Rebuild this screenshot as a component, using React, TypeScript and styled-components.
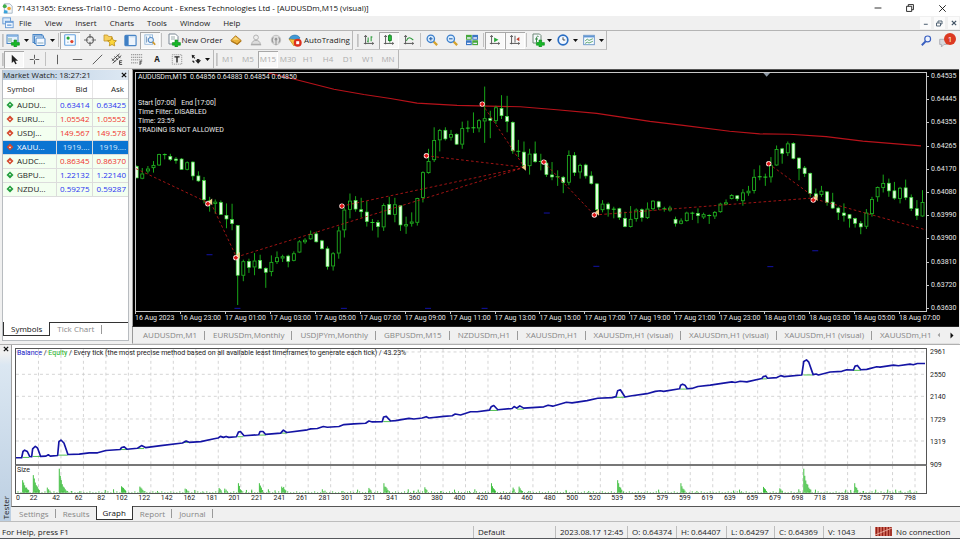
import React from 'react';
import styled, { createGlobalStyle, css } from 'styled-components';

const UI = '"Open Sans", "Noto Sans", sans-serif';
const CHART = 'Roboto, "Open Sans", sans-serif';

const GlobalStyle = createGlobalStyle`
  *, *::before, *::after { box-sizing: border-box; }
  body { margin: 0; background: #f0f0f0; }
  button, input { font: inherit; color: inherit; }
`;

/* ---------- shell ---------- */

const Window = styled.div`
  display: flex;
  flex-direction: column;
  min-height: 100vh;
  background: #f0f0f0;
  color: #1c1c1c;
  font: 8px/12px ${UI};
  border-bottom: 1px solid #55585c;
  overflow: hidden;
`;

const plainButton = css`
  display: flex;
  align-items: center;
  margin: 0;
  padding: 0;
  border: 0;
  background: none;
  font: inherit;
  color: inherit;
  white-space: nowrap;
`;

const TitleBar = styled.header`
  display: flex;
  align-items: center;
  height: 16px;
  padding-left: 2px;
  gap: 4px;
  background: #fff;
`;

const Title = styled.h1`
  margin: 0;
  flex: 1;
  font: inherit;
  line-height: 16px;
  color: #111;
`;

const WindowButtons = styled.div`
  display: flex;
  padding-right: 2px;
`;

const WindowButton = styled.button`
  ${plainButton}
  justify-content: center;
  width: 32px;
  height: 14px;
`;

const MenuBar = styled.nav`
  display: flex;
  align-items: center;
  height: 15px;
  padding-left: 2px;
  border-bottom: 1px solid #b4b4b4;
`;

const MenuItems = styled.div`
  display: flex;
  flex: 1;
  gap: 13px;
  padding-left: 5px;
`;

const MenuButton = styled.button`
  ${plainButton}
  height: 14px;
`;

const ChildButtons = styled.div`
  display: flex;
  gap: 3px;
  padding-right: 1px;
`;

const ChildButton = styled.button`
  ${plainButton}
  justify-content: center;
  width: 11px;
  height: 12px;
  background: #fbfbfb;
`;

/* ---------- toolbars ---------- */

const ToolRow = styled.div<{ $gap?: number }>`
  display: flex;
  align-items: center;
  height: 19px;
  gap: ${(p) => p.$gap ?? 0}px;
  padding-right: 4px;
`;

const ToolGroup = styled.div`
  display: flex;
  align-items: center;
  height: 19px;
  padding-left: 4px;
  border-bottom: 1px solid #c4c4c4;
  border-right: 1px solid #b8b8b8;
  &::before {
    content: '';
    width: 2px;
    height: 13px;
    margin-left: -2px;
    border-left: 1px solid #c2c2c2;
    border-right: 1px solid #cfcfcf;
  }
`;

const ToolButton = styled.button<{ $w?: number; $pressed?: boolean; $gap?: number }>`
  ${plainButton}
  justify-content: center;
  width: ${(p) => p.$w ?? 20}px;
  height: 17px;
  gap: ${(p) => p.$gap ?? 0}px;
  ${(p) =>
    p.$pressed &&
    css`
      background: #f8f8f8;
      box-shadow: inset 1px 1px #a8a8a8, inset -1px -1px #fff;
    `}
`;

const Frame = styled(ToolButton)`
  color: #adadad;
`;

const Divider = styled.span`
  width: 1px;
  height: 14px;
  margin: 0 1px;
  background: #c0c0c0;
`;

const Spacer = styled.span`
  flex: 1;
`;

const Alert = styled.button`
  ${plainButton}
  position: relative;
  width: 18px;
  height: 17px;
`;

const Badge = styled.span`
  position: absolute;
  top: 1px;
  right: 0;
  width: 12px;
  height: 12px;
  border-radius: 50%;
  background: #dc3a22;
  color: #fff;
  line-height: 12px;
  text-align: center;
`;

/* ---------- market watch ---------- */

const Main = styled.main`
  display: flex;
  flex: 1 1 275px;
  min-height: 275px;
  gap: 3px;
  padding: 0 1px 0 2px;
`;

const Watch = styled.section`
  display: flex;
  flex-direction: column;
  flex: 0 0 127px;
  margin: 1px 0 3px;
  border: 1px solid #b8bcc0;
  border-top: 0;
  background: #fff;
`;

const WatchHead = styled.div`
  display: flex;
  align-items: center;
  justify-content: space-between;
  height: 10px;
  padding-right: 1px;
  line-height: 10px;
  background: linear-gradient(90deg, #b9cde1, #dde8f3);
`;

const WatchTable = styled.table`
  width: 100%;
  table-layout: fixed;
  border-collapse: collapse;
`;

const Th = styled.th<{ $end?: boolean; $w: number }>`
  width: ${(p) => p.$w}px;
  height: 18px;
  padding: 0 4px;
  font-weight: 400;
  text-align: ${(p) => (p.$end ? 'right' : 'left')};
  border-right: 1px solid #e6e6e6;
  border-bottom: 1px solid #d4d4d4;
  &:last-child { border-right: 0; }
`;

const Tr = styled.tr<{ $selected?: boolean; $down?: boolean }>`
  background: ${(p) => (p.$selected ? '#0b74d2' : '#f3fff0')};
  color: ${(p) => (p.$selected ? '#fff' : '#1c1c1c')};
  td + td {
    color: ${(p) => (p.$selected ? '#d8ecff' : p.$down ? '#f0322c' : '#2a34f0')};
  }
`;

const Td = styled.td<{ $end?: boolean }>`
  height: 14px;
  padding: 0 2px 0 3px;
  text-align: ${(p) => (p.$end ? 'right' : 'left')};
  border-right: 1px solid #dcdcdc;
  border-bottom: 1px solid #dcdcdc;
  white-space: nowrap;
  &:last-child { border-right: 0; }
`;

const SymbolCell = styled.span`
  display: flex;
  align-items: center;
  gap: 3px;
`;

const PanelTabs = styled.div`
  display: flex;
  height: 18px;
  margin-top: auto;
  border-top: 1px solid #333;
`;

const PanelTab = styled.button<{ $active?: boolean }>`
  ${plainButton}
  height: 14px;
  margin-top: -1px;
  padding: 0 7px;
  color: ${(p) => (p.$active ? '#111' : '#8a8a8a')};
  ${(p) =>
    p.$active
      ? css`
          background: #fff;
          border: 1px solid #333;
          border-top: 0;
        `
      : css`
          &::after { content: ''; width: 1px; height: 9px; margin-left: 7px; margin-right: -7px; background: #9a9a9a; }
        `}
`;

/* ---------- price chart ---------- */

const ChartColumn = styled.section`
  display: flex;
  flex-direction: column;
  flex: 1;
  min-width: 0;
`;

const ChartFrame = styled.div`
  display: grid;
  flex: 1;
  grid-template-columns: minmax(0, 1fr) 32px;
  grid-template-rows: minmax(0, 1fr) 14px;
  padding: 2px 0 0 2px;
  background: #000;
  border-top: 1px solid #555;
  border-left: 1px solid #a0a0a0;
  color: #e8e8e8;
  font: 7px/9px ${CHART};
`;

const PlotArea = styled.div`
  position: relative;
  border: 1px solid #c8c8c8;
`;

const PlotSvg = styled.svg`
  position: absolute;
  inset: 0;
  width: 100%;
  height: 100%;
`;

const PlotNotes = styled.pre`
  position: relative;
  margin: 0;
  padding: 0 0 0 2px;
  font: inherit;
`;

const NoteBlock = styled.span`
  display: block;
  margin-top: 17px;
`;

const PriceAxis = styled.div`
  display: flex;
  flex-direction: column;
  justify-content: space-between;
  margin-bottom: -1px;
`;

const PriceLabel = styled.span`
  display: flex;
  align-items: center;
  gap: 2px;
  &::before { content: ''; width: 2px; height: 1px; background: #c8c8c8; }
`;

const TimeAxis = styled.div`
  display: grid;
  grid-column: 1 / -1;
  grid-template-columns: repeat(18, minmax(0, 1fr));
  margin-right: 15px;
`;

const TimeLabel = styled.span`
  white-space: nowrap;
  &::before { content: ''; display: block; width: 1px; height: 2px; background: #c8c8c8; }
`;

const ChartTabs = styled.div`
  display: flex;
  align-items: center;
  height: 18px;
  padding-right: 2px;
  border-top: 1px solid #222;
  border-left: 1px solid #999;
  border-bottom: 1px solid #e0e0e0;
  color: #868686;
`;

const ChartTabList = styled.div`
  display: flex;
  flex: 1;
  min-width: 0;
  overflow: hidden;
  padding-left: 2px;
`;

const ChartTab = styled.button`
  ${plainButton}
  flex: none;
  height: 9px;
  padding: 0 7px 0 8px;
  border-right: 1px solid #9a9a9a;
  &:last-child { border-right: 0; padding-right: 0; }
`;

const ScrollButton = styled.button`
  ${plainButton}
  justify-content: center;
  width: 12px;
  height: 12px;
`;

/* ---------- tester ---------- */

const Tester = styled.section`
  display: flex;
  height: 177px;
  border-top: 1px solid #b0b0b0;
`;

const TesterRail = styled.div`
  display: flex;
  flex-direction: column;
  align-items: center;
  justify-content: space-between;
  width: 11px;
  padding: 1px 0 2px;
  background: linear-gradient(#f0f0f0 8px, #dbe7f2 20px, #bccfe2);
`;

const RailLabel = styled.span`
  writing-mode: vertical-rl;
  transform: rotate(180deg);
  line-height: 11px;
`;

const TesterBody = styled.div`
  display: flex;
  flex-direction: column;
  flex: 1;
  min-width: 0;
`;

const TesterPlots = styled.div`
  display: grid;
  grid-template-columns: minmax(0, 1fr) 32px;
  grid-template-rows: 118px 28px 12px;
  padding: 3px 1px 0 3px;
  background: #fff;
  border-left: 1px solid #a0a0a0;
  border-bottom: 1px solid #555;
  font: 7px/9px ${CHART};
  margin-bottom: -1px;
`;

const BalancePlot = styled.div`
  position: relative;
  border: 1px solid #555;
  border-bottom: 2px solid #777;
`;

const SizePlot = styled.div`
  position: relative;
  border: 1px solid #555;
  border-top: 0;
`;

const Legend = styled.p`
  position: relative;
  margin: 0;
  padding: 0 0 0 1px;
  white-space: nowrap;
  color: #222;
`;

const Tint = styled.span<{ $c: string }>`
  color: ${(p) => p.$c};
`;

const BalanceAxis = styled.div`
  display: flex;
  flex-direction: column;
  justify-content: space-between;
  height: 122px;
  padding-left: 3px;
`;

const TradeAxis = styled.div`
  display: grid;
  grid-template-columns: repeat(40, minmax(0, 45fr)) minmax(0, 22fr);
  grid-column: 1;
  grid-row: 3;
`;

const TradeTick = styled.span`
  display: flex;
  justify-content: flex-end;
  white-space: nowrap;
`;

const TradeZero = styled.span`
  margin-right: auto;
  padding-left: 1px;
`;

const TesterTabs = styled.div`
  display: flex;
  align-items: center;
  height: 15px;
  padding-left: 1px;
`;

const TesterTab = styled.button<{ $active?: boolean; $bare?: boolean }>`
  ${plainButton}
  height: ${(p) => (p.$active ? 14 : 9)}px;
  padding: 0 6px 0 7px;
  color: ${(p) => (p.$active ? '#111' : '#868686')};
  ${(p) =>
    p.$active
      ? css`
          align-self: flex-start;
          border: 1px solid #333;
          border-top: 0;
          background: #fff;
          padding: 0 6px;
        `
      : !p.$bare &&
        css`
          border-right: 1px solid #9a9a9a;
        `}
`;

/* ---------- status bar ---------- */

const StatusBar = styled.footer`
  display: flex;
  align-items: center;
  height: 17px;
  padding-top: 3px;
  border-top: 1px solid #bdbdbd;
`;

const StatusCell = styled.span<{ $w?: number }>`
  display: flex;
  align-items: center;
  gap: 4px;
  flex: ${(p) => (p.$w ? `0 0 ${p.$w}px` : '1 1 0')};
  height: 12px;
  padding-left: ${(p) => (p.$w ? 4 : 2)}px;
  border-left: ${(p) => (p.$w ? '1px solid #bdbdbd' : '0')};
  white-space: nowrap;
`;

/* ---------- icons ---------- */

const IconSvg = styled.svg`
  display: block;
  flex: none;
`;

const Icon = ({ children, size = 12 }: { children: React.ReactNode; size?: number }) => (
  <IconSvg width={size} height={size} viewBox="0 0 14 14" fill="none" aria-hidden>
    {children}
  </IconSvg>
);

const Caret = () => (
  <IconSvg width="5" height="3" viewBox="0 0 5 3" aria-hidden>
    <path d="M0 0h5L2.5 3z" fill="#111" />
  </IconSvg>
);

const plus = <path d="M8 7h2.6v2.6h2.8v2.6h-2.8V14H8v-1.8H5.4V9.6H8z" fill="#18b828" stroke="#0a8a1a" strokeWidth=".6" />;
const axes = <path d="M3 2v10M1.5 3.5L3 1.5l1.5 2M1 11h11M10.8 9.8l1.7 1.2-1.7 1.3" stroke="#555" strokeWidth="1.1" />;

const LogoIcon = () => (
  <Icon size={11}>
    <path d="M3 1h7l3 3v9H3z" fill="#f4f7fa" stroke="#9ab" />
    <circle cx="3.5" cy="4" r="2.5" fill="#3fae49" />
    <circle cx="9" cy="7" r="2.3" fill="#f4a32c" />
    <path d="M3 9l4 1v3H2z" fill="#38a3dc" />
  </Icon>
);
const ChildIcon = () => (
  <Icon size={12}>
    <rect x="1" y="1" width="9" height="7" fill="#dcebfa" stroke="#5f95d3" />
    <rect x="4" y="5" width="9" height="7.5" fill="#eef6ff" stroke="#5f95d3" />
    <path d="M4 6h9M6 9.5h5" stroke="#5f95d3" strokeWidth="1.4" />
  </Icon>
);
const NewChartIcon = () => (
  <Icon size={14}>
    <rect x="1" y="2" width="11" height="8.5" fill="#e6f1fc" stroke="#4a86c6" />
    <path d="M2 3h9" stroke="#7fb0e2" strokeWidth="1.6" />
    <path d="M3 5v4M5 5v4" stroke="#7a9" />
    {plus}
  </Icon>
);
const ProfilesIcon = () => (
  <Icon size={14}>
    <rect x="1" y="1.5" width="9" height="8" fill="#cfe2f6" stroke="#4a86c6" />
    <rect x="2.5" y="3" width="9" height="7.5" fill="#e6f1fc" stroke="#4a86c6" />
    <rect x="4" y="5" width="9" height="7.5" rx="1" fill="#f3f8ff" stroke="#4a86c6" />
    <path d="M5.5 10h6" stroke="#8ab" />
  </Icon>
);
const WatchIcon = () => (
  <Icon>
    <rect x=".8" y=".8" width="12.4" height="12.4" rx="1" fill="#f7fbff" stroke="#67a3e0" strokeWidth="1.3" />
    <circle cx="4.8" cy="4.8" r="1.9" fill="#22a532" />
    <circle cx="9.2" cy="8.8" r="1.9" fill="#e0442c" />
    <path d="M3.5 9.5h2" stroke="#9ab" />
  </Icon>
);
const CrosshairIcon = () => (
  <Icon>
    <circle cx="7" cy="7" r="4" stroke="#666" strokeWidth="1.3" />
    <path d="M7 0v5M7 9v5M0 7h5M9 7h5" stroke="#666" strokeWidth="1.3" />
  </Icon>
);
const NavigatorIcon = () => (
  <Icon size={14}>
    <path d="M1 2h3.5l1 1.5H9V8H1z" fill="#f6cf5c" stroke="#c3942a" strokeWidth=".8" />
    <path d="M9 4.5l1.4 2.8 3 .4-2.2 2.2.5 3L9 11.5l-2.7 1.4.5-3-2.2-2.2 3-.4z" fill="#fbd63c" stroke="#b98a14" strokeWidth=".8" />
  </Icon>
);
const TerminalIcon = () => (
  <Icon size={13}>
    <rect x="1" y="1.5" width="12" height="11" rx="1" fill="#eef5fc" stroke="#4a86c6" strokeWidth="1.3" />
    <path d="M1 2h4v10H1z" fill="#3f7fc4" />
    <path d="M6 3h6" stroke="#b8d2ec" />
  </Icon>
);
const TesterIcon = () => (
  <Icon>
    <rect x="1" y="1" width="9" height="11" fill="#f7fbff" stroke="#8fb4d8" />
    <path d="M3 3v7M5 5v4M7 2v3" stroke="#6a8fb5" />
    <circle cx="8" cy="7" r="3" fill="#e3f0fb" stroke="#5b8fc8" strokeWidth="1.2" />
    <path d="M10.2 9.2L13 12.5" stroke="#d09a2c" strokeWidth="2" />
  </Icon>
);
const OrderIcon = () => (
  <Icon size={14}>
    <path d="M2 1h6.5L11 3.5V11H2z" fill="#fff" stroke="#7a8794" />
    <path d="M4 4h4M4 6h4" stroke="#9aa" />
    {plus}
  </Icon>
);
const GoldIcon = () => (
  <Icon>
    <path d="M1 7.5L6.5 2 13 7.5 8.5 12z" fill="#e9b03a" stroke="#a87018" />
    <path d="M3 6.8l3.5-3.4 4 3.4z" fill="#f8da80" />
    <path d="M1.5 8.5l7 3.5 4.5-4" stroke="#b07818" strokeWidth="1.4" />
  </Icon>
);
const MetaIcon = () => (
  <Icon>
    <circle cx="7" cy="4" r="2.8" fill="#eee" stroke="#aaa" />
    <path d="M2 12c0-3 2-4.5 5-4.5s5 1.5 5 4.5z" fill="#ddd" stroke="#aaa" />
    <path d="M1 12.5h12" stroke="#aaa" strokeWidth="1.5" />
  </Icon>
);
const SignalIcon = () => (
  <Icon>
    <circle cx="7" cy="7" r="5.5" fill="#e0e0e0" stroke="#bbb" />
    <path d="M4 4a4 4 0 000 6M10 4a4 4 0 010 6M7 6v7" stroke="#999" strokeWidth="1.3" />
    <circle cx="7" cy="6" r="1.5" fill="#999" />
  </Icon>
);
const AutoIcon = () => (
  <Icon size={14}>
    <path d="M1 6c2-5 9-5 11-1L8 8z" fill="#3f9ad8" stroke="#2a72ac" strokeWidth=".7" />
    <path d="M1 6l5 7 4-6z" fill="#f4c542" stroke="#b48a1c" strokeWidth=".7" />
    <circle cx="9.7" cy="9.7" r="4" fill="#dc2f1c" />
    <rect x="8.2" y="8.2" width="3" height="3" fill="#fff" />
  </Icon>
);
const BarsIcon = () => (
  <Icon>
    {axes}
    <path d="M6 4v6M6 8.5H4.8M9.5 2.5v6M9.5 3.5H11" stroke="#2a9a38" strokeWidth="1.2" />
  </Icon>
);
const CandlesIcon = () => (
  <Icon>
    {axes}
    <path d="M8 0v10" stroke="#107a20" />
    <rect x="6.3" y="2" width="3.4" height="5.5" fill="#27c23a" stroke="#107a20" />
  </Icon>
);
const LineIcon = () => (
  <Icon>
    {axes}
    <path d="M4 8c2-5 4-4 8-1" stroke="#2a9a38" strokeWidth="1.2" />
  </Icon>
);
const Lens = ({ minus }: { minus?: boolean }) => (
  <Icon>
    <path d="M8.5 8.5l4.5 4.5" stroke="#d6a22c" strokeWidth="2.6" />
    <circle cx="5.6" cy="5.6" r="4.3" fill="#d9ecfd" stroke="#3b7fcc" strokeWidth="1.5" />
    <path d={minus ? 'M3.5 5.6h4.2' : 'M3.5 5.6h4.2M5.6 3.5v4.2'} stroke="#2a62a8" strokeWidth="1.3" />
  </Icon>
);
const TileIcon = () => (
  <Icon>
    <rect x="0" y="1" width="6.7" height="5.7" fill="#46a83c" />
    <rect x="7.3" y="1" width="6.7" height="5.7" fill="#3a76c4" />
    <rect x="0" y="7.3" width="6.7" height="5.7" fill="#3a76c4" />
    <rect x="7.3" y="7.3" width="6.7" height="5.7" fill="#46a83c" />
    <path d="M1.2 4.6h4.3M8.5 4.6h4.3M1.2 11h4.3M8.5 11h4.3" stroke="#eef" strokeWidth="1.6" />
  </Icon>
);
const ScrollIcon = () => (
  <Icon>
    {axes}
    <path d="M6 4l5 2.8L6 9.5z" fill="#2aa83a" />
  </Icon>
);
const ShiftIcon = () => (
  <Icon>
    {axes}
    <path d="M7 2v8" stroke="#666" strokeWidth="1.2" />
    <path d="M12 3.5v5L8.5 6z" fill="#c03c2c" />
  </Icon>
);
const IndicatorsIcon = () => (
  <Icon size={14}>
    <path d="M2 1h6.5L10 2.5V10H2z" fill="#f4f7fa" stroke="#6f8a78" />
    <path d="M7.5 3.5c-2-1-2 1-2 2.5v3M4 6h3" stroke="#3a8a48" />
    {plus}
  </Icon>
);
const ClockIcon = () => (
  <Icon>
    <circle cx="7" cy="7" r="5.6" fill="#f2f8ff" stroke="#2a6ec4" strokeWidth="2" />
    <path d="M7 3.8V7h2.6" stroke="#333" />
  </Icon>
);
const TemplateIcon = () => (
  <Icon>
    <rect x=".8" y="1.5" width="12.4" height="11" fill="#f5faff" stroke="#5f8fc4" />
    <path d="M1 3h12" stroke="#5f95d3" strokeWidth="2" />
    <path d="M2.5 8l2.5-2 2 1.5 4.5-2M2.5 11L5 9.5l2 1 4.500-2" stroke="#4a9a5a" />
  </Icon>
);
const SearchIcon = () => (
  <Icon size={11}>
    <circle cx="8.5" cy="5" r="3.7" fill="#eef4ff" stroke="#3a5fc0" strokeWidth="1.5" />
    <path d="M6 8l-5 5" stroke="#3a5fc0" strokeWidth="2.4" />
  </Icon>
);
const BubbleIcon = () => (
  <Icon size={12}>
    <path d="M2 5h9v6H7l-3 3v-3H2z" fill="#d8d8dc" stroke="#a8a8b0" />
  </Icon>
);
const CursorIcon = () => (
  <Icon size={11}>
    <path d="M3.5 1v10.5l2.6-2.3 2 4 1.7-.9-1.900-3.800h3.600z" fill="#222" />
  </Icon>
);
const CrossIcon = () => (
  <Icon size={11}>
    <path d="M7 1v5M7 8v5M1 7h5M8 7h5" stroke="#555" strokeWidth="1.2" />
  </Icon>
);
const Stroke = ({ d }: { d: string }) => (
  <Icon size={11}>
    <path d={d} stroke="#555" strokeWidth="1.2" />
  </Icon>
);
const ChannelIcon = () => (
  <Icon size={12}>
    <path d="M1 9l9-8M2 12l10-9M1 6.5l4 4M4 4l4 4M7 2l4 4" stroke="#444" strokeWidth="1.1" />
    <path d="M13 9h-3v4.500h3M10 11.200h2.500" stroke="#333" />
  </Icon>
);
const FiboIcon = () => (
  <Icon size={12}>
    <path d="M0 2h13M0 5h13M0 8h13M0 11.500h8" stroke="#777" strokeDasharray="1.5 .8" />
    <path d="M13 9.500h-2.500V14M10.500 11.700h2" stroke="#333" />
  </Icon>
);
const LabelIcon = () => (
  <Icon size={12}>
    <rect x="1.5" y="2" width="11" height="11" stroke="#888" strokeDasharray="1.3 1" />
    <path d="M4 4.500h6M7 4.500V11" stroke="#222" strokeWidth="1.6" />
  </Icon>
);
const ArrowsIcon = () => (
  <Icon size={12}>
    <path d="M2 2l4 1-1.500 1.200 1.700 1.600-1 1-1.600-1.700L2.500 6.500zM13 8.500l-3.500 4-3.500-4h2V7h3v1.500z" fill="#222" />
    <path d="M3 9l2 2" stroke="#222" strokeWidth="1.5" />
  </Icon>
);
const CloseIcon = ({ size = 6, color = '#111', w = 2 }: { size?: number; color?: string; w?: number }) => (
  <Icon size={size}>
    <path d="M2 2l10 10M12 2L2 12" stroke={color} strokeWidth={w} />
  </Icon>
);
const SignIcon = ({ up }: { up: boolean }) => (
  <IconSvg width="8" height="8" viewBox="0 0 8 8" aria-hidden>
    <path d="M4 .5L7.500 4 4 7.500.5 4z" fill={up ? '#1f9d3a' : '#d4472c'} />
    <path d={up ? 'M4 2.400L5.400 4.300H2.600z' : 'M4 5.600L2.600 3.700h2.800z'} fill="#fff" />
  </IconSvg>
);
const ConnectionIcon = () => (
  <IconSvg width="17" height="9" viewBox="0 0 17 9" aria-hidden>
    <rect width="17" height="9" fill="#d66f60" />
    <path d="M1.500 0v9M4.500 0v9M7.500 0v9M10.500 0v9M13.500 0v9M16 0v9" stroke="#8f1f18" strokeWidth="1.4" />
    <path d="M0 8L17 1" stroke="#f0c0b4" strokeWidth=".8" />
  </IconSvg>
);

/* ---------- price data ---------- */

type Kind = 'u' | 'd' | 'x';
type Candle = [number, number, number, number, Kind];

const candles: Candle[] = [
  [290, 293, 328, 328, 'd'], [298, 315, 330, 332, 'u'], [292, 300, 308, 315, 'u'], [277, 289, 298, 312, 'u'],
  [255, 256, 290, 292, 'u'], [254, 256, 260, 272, 'x'], [255, 263, 272, 277, 'd'], [265, 271, 275, 285, 'd'],
  [268, 271, 302, 303, 'd'], [278, 281, 303, 305, 'u'], [278, 280, 322, 335, 'd'], [308, 322, 337, 340, 'd'],
  [325, 336, 394, 405, 'd'], [385, 396, 400, 430, 'x'], [393, 400, 406, 436, 'u'], [396, 402, 438, 440, 'd'],
  [405, 441, 452, 480, 'd'], [406, 454, 466, 486, 'd'], [470, 472, 622, 712, 'd'], [575, 580, 623, 640, 'u'],
  [572, 580, 598, 615, 'd'], [555, 578, 598, 622, 'u'], [560, 577, 601, 603, 'd'], [598, 601, 613, 660, 'd'],
  [562, 582, 612, 625, 'u'], [550, 568, 582, 588, 'u'], [560, 565, 571, 582, 'u'], [560, 564, 580, 598, 'd'],
  [550, 556, 578, 580, 'u'], [516, 520, 553, 555, 'u'], [510, 515, 522, 527, 'u'], [487, 498, 513, 515, 'u'],
  [490, 497, 521, 523, 'd'], [515, 518, 542, 544, 'd'], [535, 542, 596, 605, 'd'], [552, 556, 595, 608, 'u'],
  [475, 487, 556, 572, 'u'], [418, 424, 486, 508, 'u'], [375, 397, 424, 450, 'u'], [383, 396, 422, 430, 'd'],
  [388, 424, 430, 448, 'd'], [398, 431, 460, 475, 'd'], [452, 461, 465, 487, 'x'], [455, 463, 475, 508, 'd'],
  [405, 410, 477, 488, 'u'], [385, 408, 438, 440, 'd'], [388, 408, 439, 462, 'u'], [410, 412, 470, 488, 'd'],
  [445, 468, 473, 497, 'u'], [432, 460, 466, 475, 'u'], [388, 389, 463, 472, 'u'], [308, 311, 388, 402, 'u'],
  [240, 277, 313, 315, 'u'], [175, 214, 274, 280, 'u'], [180, 184, 214, 248, 'u'], [175, 184, 210, 215, 'd'],
  [183, 196, 206, 215, 'u'], [193, 196, 226, 228, 'd'], [158, 178, 227, 240, 'u'], [155, 176, 178, 190, 'x'],
  [130, 175, 179, 192, 'x'], [150, 154, 178, 190, 'u'], [52, 148, 157, 222, 'u'], [125, 148, 154, 208, 'd'],
  [110, 115, 156, 165, 'u'], [78, 118, 140, 150, 'd'], [80, 142, 157, 190, 'd'], [157, 160, 246, 255, 'd'],
  [213, 246, 250, 265, 'x'], [218, 250, 290, 293, 'd'], [240, 255, 292, 318, 'u'], [218, 255, 279, 282, 'd'],
  [255, 277, 280, 305, 'x'], [275, 283, 318, 325, 'd'], [280, 319, 325, 335, 'd'], [305, 323, 326, 352, 'x'],
  [322, 326, 342, 374, 'd'], [245, 259, 342, 350, 'u'], [250, 260, 312, 322, 'd'], [285, 289, 311, 330, 'u'],
  [285, 289, 322, 330, 'd'], [308, 322, 345, 348, 'd'], [343, 346, 424, 428, 'd'], [395, 406, 425, 432, 'u'],
  [402, 407, 422, 445, 'd'], [415, 421, 424, 450, 'x'], [418, 421, 447, 455, 'd'], [430, 450, 475, 477, 'd'],
  [413, 452, 476, 478, 'u'], [420, 424, 452, 460, 'u'], [420, 424, 448, 460, 'd'], [402, 421, 449, 452, 'u'],
  [395, 397, 422, 427, 'u'], [397, 400, 416, 425, 'd'], [415, 420, 423, 430, 'x'], [412, 418, 426, 430, 'u'],
  [445, 453, 465, 475, 'd'], [450, 457, 466, 468, 'u'], [430, 433, 458, 460, 'u'], [430, 433, 436, 455, 'x'],
  [420, 435, 442, 465, 'd'], [433, 438, 447, 452, 'u'], [438, 440, 443, 467, 'x'], [428, 431, 444, 452, 'u'],
  [403, 406, 431, 433, 'u'], [393, 402, 407, 410, 'u'], [377, 380, 391, 393, 'u'], [380, 382, 391, 398, 'd'],
  [362, 372, 398, 412, 'u'], [352, 367, 374, 382, 'u'], [302, 325, 367, 375, 'u'], [290, 323, 326, 335, 'x'],
  [315, 324, 327, 352, 'x'], [265, 290, 326, 342, 'u'], [230, 241, 290, 292, 'u'], [237, 240, 254, 285, 'd'],
  [218, 224, 253, 262, 'u'], [220, 224, 269, 272, 'd'], [266, 268, 299, 335, 'd'], [292, 298, 315, 325, 'd'],
  [312, 314, 375, 385, 'd'], [360, 376, 386, 395, 'd'], [352, 367, 379, 385, 'u'], [368, 370, 402, 412, 'd'],
  [373, 401, 419, 422, 'd'], [415, 419, 432, 455, 'd'], [405, 434, 441, 460, 'd'], [437, 439, 450, 478, 'd'],
  [448, 451, 465, 478, 'd'], [458, 465, 476, 498, 'd'], [422, 433, 475, 482, 'u'], [385, 392, 437, 445, 'u'],
  [354, 356, 386, 400, 'u'], [318, 344, 358, 372, 'u'], [330, 344, 367, 385, 'd'], [340, 367, 389, 394, 'd'],
  [355, 358, 391, 405, 'u'], [333, 358, 387, 395, 'd'], [378, 387, 420, 428, 'd'], [395, 421, 442, 455, 'd'],
  [365, 401, 444, 446, 'u'],
];

const average =
  '397,11 465,27 595,60 685,76 765,88 845,102 965,109 1155,113 1265,122 1385,133 1465,145 1545,157 1645,169 1785,187 1875,195 1965,196 2075,203 2185,217 2360,231';

const deals = [
  [0, 300, 215, 402], [225, 403, 302, 567], [302, 567, 1168, 296], [619, 413, 1168, 296], [873, 261, 1168, 296],
  [1041, 105, 1168, 296], [1226, 280, 1378, 440], [1378, 440, 2042, 388], [1902, 285, 2042, 388], [2042, 392, 2375, 485],
];
const entries = [[216, 406], [300, 569], [619, 413], [873, 261], [1041, 105], [1226, 280], [1378, 440], [1902, 285], [2036, 395]];
const exits = [[225, 400], [308, 562], [1168, 296], [1388, 432], [2045, 388]];
const levels = [[221, 560], [305, 722], [625, 722], [878, 722], [1048, 722], [1235, 434], [1384, 595], [1907, 596], [2042, 548]];

const STEP = 16.875;

const PriceSvg = () => (
  <PlotSvg viewBox="0 11 2375 719" preserveAspectRatio="none" role="img" aria-label="AUDUSDm M15 candles">
    <polyline points={average} fill="none" stroke="#b8121a" strokeWidth="3.5" />
    {candles.map(([high, top, bottom, low, kind], i) => {
      const x = 2 + i * STEP;
      return (
        <g key={i}>
          <path d={`M${x} ${high}V${kind === 'u' ? top : low}${kind === 'u' ? `M${x} ${bottom}V${low}` : ''}`} stroke="#18a818" strokeWidth="3" />
          {kind === 'x' && <path d={`M${x - 6} ${top + 1.5}h12`} stroke="#2cd42c" strokeWidth="3" />}
          {kind === 'd' && <rect x={x - 4.5} y={top} width="9" height={bottom - top} fill="#e4ffe0" stroke="#38dc38" strokeWidth="2" />}
          {kind === 'u' && <rect x={x - 4.5} y={top + 1} width="9" height={Math.max(bottom - top - 2, 4)} fill="#000" stroke="#22bc22" strokeWidth="2.5" />}
        </g>
      );
    })}
    {deals.map(([a, b, c, d]) => (
      <path key={`${a}-${b}-${d}`} d={`M${a} ${b}L${c} ${d}`} stroke="#c01818" strokeWidth="2.5" strokeDasharray="8 7" />
    ))}
    {levels.map(([x, y]) => (
      <path key={`${x}-${y}`} d={`M${x - 9} ${y}h18`} stroke="#1212a8" strokeWidth="3" />
    ))}
    {exits.map(([x, y]) => (
      <path key={`${x}-${y}`} d={`M${x - 8} ${y}l12 -10v20z`} fill="#f0d48a" />
    ))}
    {entries.map(([x, y]) => (
      <g key={`${x}-${y}`}>
        <circle cx={x} cy={y} r="8" fill="#ffe8e4" />
        <path d={`M${x} ${y - 7}l7 7 -7 7 -7 -7z`} fill="#dc1414" />
      </g>
    ))}
    <path d="M1886 11h20l-10 11z" fill="#8c98a4" />
  </PlotSvg>
);

const prices = ['0.64535', '0.64445', '0.64355', '0.64265', '0.64170', '0.64080', '0.63990', '0.63900', '0.63810', '0.63720', '0.63630'];
const times = ['16 Aug 2023', '16 Aug 23:00', '17 Aug 01:00', '17 Aug 03:00', '17 Aug 05:00', '17 Aug 07:00', '17 Aug 09:00', '17 Aug 11:00', '17 Aug 13:00', '17 Aug 15:00', '17 Aug 17:00', '17 Aug 19:00', '17 Aug 21:00', '17 Aug 23:00', '18 Aug 01:00', '18 Aug 03:00', '18 Aug 05:00', '18 Aug 07:00'];

/* ---------- tester data ---------- */

const balanceParts: [number, string][] = [
  [-45, '45,415 62,415 66,396 71,392 79,396 86,411 92,412 95,388 103,380 110,386 119,411 135,410 142,406 148,410 170,408 174,366 180,361 189,370 201,405 235,404 265,400 290,400 315,393 358,390 362,384 370,382 378,389 410,386 422,378 434,384 480,378 545,370 556,364 565,368 600,366 640,357 652,355 659,350 668,353 676,350 684,353 707,351 713,337 719,335 730,348 774,345 778,335 787,335 795,344 840,340 848,331 858,338 920,330'],
  [885, '0,327 20,326 38,320 50,322 85,320 100,314 130,312 165,310 175,303 185,306 215,305 219,291 227,289 240,303 255,302 295,295 310,297 335,294 347,290 355,294 400,289 425,287 434,282 450,285 480,275 500,275 537,270 542,260 550,256 562,269 605,265 611,259 619,264 628,257 640,264 700,260 713,255 727,258 768,246 785,248 830,241 862,234 905,232 917,229 922,211 930,208 944,230'],
  [1845, '0,227 50,220 75,213 90,211 100,213 148,205 151,194 157,191 164,194 171,205 185,204 203,198 240,194 305,184 315,186 330,182 350,184 395,174 399,168 407,166 412,173 440,171 452,165 462,168 515,163 521,122 529,117 536,124 549,162 558,160 565,163 600,154 635,152 650,147 670,148 675,136 682,134 692,147 710,146 740,138 750,139 790,133 805,135 840,130 850,132 862,128 885,128'],
];
const balance = balanceParts
  .flatMap(([shift, pts]) => pts.split(' ').map((p) => p.split(',').map(Number)).map(([x, y]) => `${x + shift},${y}`))
  .join(' ');

const equity = [
  [20, 414, 20], [50, 411, 23], [127, 407, 28], [315, 390, 18], [367, 387, 18], [505, 368, 12], [665, 351, 18], [730, 346, 20],
  [797, 340, 16], [1103, 305, 22], [1423, 271, 24], [1505, 267, 20], [1801, 231, 28], [1995, 206, 20], [2240, 175, 15],
  [2365, 163, 28], [2513, 149, 24],
];

const sizeParts: [number, string][] = [
  [-45, '65:37 68:30 71:22 74:15 77:15 80:10 83:8 97:52 100:42 103:30 106:22 109:18 112:12 115:8 139:15 143:10 147:6 175:71 178:50 181:37 184:25 187:18 190:15 193:10 196:6 200:5 211:5 236:4 313:8 338:10 362:19 365:16 368:14 371:10 374:7 417:18 420:15 423:12 426:8 432:5 470:5 553:12 557:10 561:6 582:8 606:4 655:14 658:11 661:7 672:12 676:9 680:4 713:28 716:20 719:10 722:7 737:8 753:9 776:28 779:21 782:15 785:8 803:10 823:7 843:18 846:14 849:17 852:10 855:7'],
  [885, '35:10 43:6 97:5 141:9 175:14 178:10 181:7 220:28 223:18 226:17 229:13 232:8 236:5 293:10 310:6 323:9 343:16 346:11 349:8 392:5 432:9 477:5 493:10 543:28 546:19 549:13 552:10 555:6 608:15 611:10 626:18 629:13 632:8 636:5 655:5 767:8 835:5 922:37 925:28 928:17 931:15 934:9 940:4'],
  [1845, '85:9 152:28 155:19 158:12 161:10 164:6 200:5 310:6 328:9 334:4 400:17 403:13 406:10 409:5 449:13 452:10 456:6 506:10 521:71 524:50 527:36 530:26 533:24 536:15 539:11 542:9 556:9 647:9 662:8 674:28 677:17 680:14 683:8 700:5 737:9 773:9 797:9 812:6 840:8 860:4'],
];
const sizes = sizeParts.flatMap(([shift, list]) => list.split(' ').map((p) => p.split(':').map(Number)).map(([x, h]) => [x + shift, h]));
const baseSizes = Array.from({ length: 300 }, (_, i) => [i * 9 + 6, i % 3 === 0 ? 4 : 2]);

const gridX = Array.from({ length: 40 }, (_, i) => 67.5 * (i + 1));
const trades = [22, 42, 62, 82, 102, 122, 142, 162, 181, 201, 221, 241, 261, 281, 301, 321, 341, 360, 380, 400, 420, 440, 460, 480, 500, 520, 539, 559, 579, 599, 619, 639, 659, 679, 698, 718, 738, 758, 778, 798];

/* ---------- content ---------- */

const menus = ['File', 'View', 'Insert', 'Charts', 'Tools', 'Window', 'Help'];
const frames = ['M1', 'M5', 'M15', 'M30', 'H1', 'H4', 'D1', 'W1', 'MN'];
const symbols = [
  { name: 'AUDU...', bid: '0.63414', ask: '0.63425', up: true },
  { name: 'EURU...', bid: '1.05542', ask: '1.05552', up: false },
  { name: 'USDJ...', bid: '149.567', ask: '149.578', up: false },
  { name: 'XAUU...', bid: '1919....', ask: '1919....', up: false, selected: true },
  { name: 'AUDC...', bid: '0.86345', ask: '0.86370', up: false },
  { name: 'GBPU...', bid: '1.22132', ask: '1.22140', up: true },
  { name: 'NZDU...', bid: '0.59275', ask: '0.59287', up: true },
];
const chartTabs = ['AUDUSDm,M1', 'EURUSDm,Monthly', 'USDJPYm,Monthly', 'GBPUSDm,M15', 'NZDUSDm,H1', 'XAUUSDm,H1', 'XAUUSDm,H1 (visual)', 'XAUUSDm,H1 (visual)', 'XAUUSDm,H1 (visual)', 'XAUUSDm,H1'];
const status: [string, number][] = [['Default', 82], ['2023.08.17 12:45', 72], ['O: 0.64374', 49], ['H: 0.64407', 50], ['L: 0.64297', 48], ['C: 0.64369', 49], ['V: 1043', 47]];

export default function App() {
  return (
    <Window>
      <GlobalStyle />
      <TitleBar>
        <LogoIcon />
        <Title>71431365: Exness-Trial10 - Demo Account - Exness Technologies Ltd - [AUDUSDm,M15 (visual)]</Title>
        <WindowButtons>
          <WindowButton aria-label="Minimize"><Icon size={8}><path d="M1 7h12" stroke="#111" strokeWidth="1.5" /></Icon></WindowButton>
          <WindowButton aria-label="Restore"><Icon size={8}><path d="M1 4h9v9H1zM4 4V1h9v9h-3" stroke="#111" strokeWidth="1.5" /></Icon></WindowButton>
          <WindowButton aria-label="Close"><CloseIcon size={9} w={1.4} /></WindowButton>
        </WindowButtons>
      </TitleBar>

      <MenuBar>
        <ChildIcon />
        <MenuItems>
          {menus.map((m) => <MenuButton key={m}>{m}</MenuButton>)}
        </MenuItems>
        <ChildButtons>
          <ChildButton aria-label="Minimize chart"><Icon size={6}><path d="M2 10h9" stroke="#567" strokeWidth="2.5" /></Icon></ChildButton>
          <ChildButton aria-label="Restore chart"><Icon size={7}><path d="M1 6h8v6H1zM4 6V2h8v6H9" stroke="#567" strokeWidth="2" /></Icon></ChildButton>
          <ChildButton aria-label="Close chart"><CloseIcon size={6} color="#456" w={3} /></ChildButton>
        </ChildButtons>
      </MenuBar>

      <ToolRow $gap={2}>
        <ToolGroup>
          <ToolButton $w={26} $gap={4} aria-label="New chart"><NewChartIcon /><Caret /></ToolButton>
          <ToolButton $w={27} $gap={4} aria-label="Profiles"><ProfilesIcon /><Caret /></ToolButton>
          <Divider />
          <ToolButton $pressed aria-label="Market Watch"><WatchIcon /></ToolButton>
          <ToolButton aria-label="Data Window"><CrosshairIcon /></ToolButton>
          <ToolButton aria-label="Navigator"><NavigatorIcon /></ToolButton>
          <ToolButton aria-label="Terminal"><TerminalIcon /></ToolButton>
          <ToolButton $pressed aria-label="Strategy Tester"><TesterIcon /></ToolButton>
          <Divider />
          <ToolButton $w={63} $gap={1}><OrderIcon />New Order</ToolButton>
          <ToolButton aria-label="MetaEditor"><GoldIcon /></ToolButton>
          <ToolButton aria-label="Community"><MetaIcon /></ToolButton>
          <ToolButton aria-label="Signals"><SignalIcon /></ToolButton>
          <ToolButton $w={66} $gap={2}><AutoIcon />AutoTrading</ToolButton>
        </ToolGroup>
        <ToolGroup>
          <ToolButton aria-label="Bar chart"><BarsIcon /></ToolButton>
          <ToolButton $pressed aria-label="Candlesticks"><CandlesIcon /></ToolButton>
          <ToolButton aria-label="Line chart"><LineIcon /></ToolButton>
          <Divider />
          <ToolButton aria-label="Zoom in"><Lens /></ToolButton>
          <ToolButton aria-label="Zoom out"><Lens minus /></ToolButton>
          <ToolButton aria-label="Tile windows"><TileIcon /></ToolButton>
          <Divider />
          <ToolButton $pressed aria-label="Auto scroll"><ScrollIcon /></ToolButton>
          <ToolButton $pressed aria-label="Chart shift"><ShiftIcon /></ToolButton>
          <Divider />
          <ToolButton $w={26} $gap={2} aria-label="Indicators"><IndicatorsIcon /><Caret /></ToolButton>
          <ToolButton $w={26} $gap={4} aria-label="Periods"><ClockIcon /><Caret /></ToolButton>
          <ToolButton $w={26} $gap={4} aria-label="Templates"><TemplateIcon /><Caret /></ToolButton>
        </ToolGroup>
        <Spacer />
        <ToolButton aria-label="Search"><SearchIcon /></ToolButton>
        <Alert aria-label="Notifications"><BubbleIcon /><Badge>1</Badge></Alert>
      </ToolRow>

      <ToolRow>
        <ToolGroup>
          <ToolButton $pressed aria-label="Cursor"><CursorIcon /></ToolButton>
          <ToolButton aria-label="Crosshair"><CrossIcon /></ToolButton>
          <Divider />
          <ToolButton aria-label="Vertical line"><Stroke d="M7 1v12" /></ToolButton>
          <ToolButton aria-label="Horizontal line"><Stroke d="M1 7h12" /></ToolButton>
          <ToolButton aria-label="Trendline"><Stroke d="M1 13L13 1" /></ToolButton>
          <ToolButton aria-label="Channel"><ChannelIcon /></ToolButton>
          <ToolButton aria-label="Fibonacci"><FiboIcon /></ToolButton>
          <ToolButton aria-label="Text"><b>A</b></ToolButton>
          <ToolButton aria-label="Label"><LabelIcon /></ToolButton>
          <ToolButton $w={26} $gap={3} aria-label="Arrows"><ArrowsIcon /><Caret /></ToolButton>
        </ToolGroup>
        <ToolGroup>
          {frames.map((f) => <Frame key={f} $pressed={f === 'M15'}>{f}</Frame>)}
        </ToolGroup>
      </ToolRow>

      <Main>
        <Watch>
          <WatchHead>Market Watch: 18:27:21<CloseIcon w={3} /></WatchHead>
          <WatchTable>
            <thead>
              <tr><Th $w={53}>Symbol</Th><Th $w={36} $end>Bid</Th><Th $w={36} $end>Ask</Th></tr>
            </thead>
            <tbody>
              {symbols.map((s) => (
                <Tr key={s.name} $selected={s.selected} $down={!s.up}>
                  <Td><SymbolCell><SignIcon up={s.up} />{s.name}</SymbolCell></Td>
                  <Td $end>{s.bid}</Td>
                  <Td $end>{s.ask}</Td>
                </Tr>
              ))}
            </tbody>
          </WatchTable>
          <PanelTabs>
            <PanelTab $active>Symbols</PanelTab>
            <PanelTab>Tick Chart</PanelTab>
          </PanelTabs>
        </Watch>

        <ChartColumn>
          <ChartFrame>
            <PlotArea>
              <PriceSvg />
              <PlotNotes>
                {'AUDUSDm,M15  0.64856 0.64883 0.64854 0.64850'}
                <NoteBlock>{'Start [07:00]   End [17:00]\nTime Filter: DISABLED\nTime: 23:59\nTRADING IS NOT ALLOWED'}</NoteBlock>
              </PlotNotes>
            </PlotArea>
            <PriceAxis>{prices.map((p) => <PriceLabel key={p}>{p}</PriceLabel>)}</PriceAxis>
            <TimeAxis>{times.map((t) => <TimeLabel key={t}>{t}</TimeLabel>)}</TimeAxis>
          </ChartFrame>
          <ChartTabs>
            <ChartTabList>{chartTabs.map((t, i) => <ChartTab key={i}>{t}</ChartTab>)}</ChartTabList>
            <ScrollButton aria-label="Previous tab"><Icon size={6}><path d="M9 2v10L4 7z" fill="#999" /></Icon></ScrollButton>
            <ScrollButton aria-label="Next tab"><Icon size={7}><path d="M5 1v12l6-6z" fill="#111" /></Icon></ScrollButton>
          </ChartTabs>
        </ChartColumn>
      </Main>

      <Tester>
        <TesterRail>
          <CloseIcon w={3} />
          <RailLabel>Tester</RailLabel>
        </TesterRail>
        <TesterBody>
          <TesterPlots>
            <BalancePlot>
              <PlotSvg viewBox="0 84 2733 350" preserveAspectRatio="none" role="img" aria-label="Balance graph">
                <path
                  d={gridX.map((x) => `M${x} 84v350`).join('') + [93, 161, 228, 297, 364].map((y) => `M0 ${y}h2733`).join('')}
                  stroke="#cccccc" strokeWidth="2.5" strokeDasharray="9 9"
                />
                <path d={equity.map(([x, y, w]) => `M${x} ${y}h${w}`).join('')} stroke="#4fc04f" strokeWidth="3" />
                <polyline points={balance} fill="none" stroke="#1414a4" strokeWidth="5" strokeLinejoin="round" />
              </PlotSvg>
              <Legend><Tint $c="#2020c8">Balance</Tint> / <Tint $c="#22b422">Equity</Tint> / Every tick (the most precise method based on all available least timeframes to generate each tick) / 43.23%</Legend>
            </BalancePlot>
            <BalanceAxis>{['2961', '2550', '2140', '1729', '1319', '909'].map((v) => <span key={v}>{v}</span>)}</BalanceAxis>
            <SizePlot>
              <PlotSvg viewBox="0 0 2733 80" preserveAspectRatio="none" role="img" aria-label="Size graph">
                <path d={gridX.map((x) => `M${x} 0v80`).join('')} stroke="#cccccc" strokeWidth="2.5" strokeDasharray="9 9" />
                <path d={[...baseSizes, ...sizes].map(([x, h]) => `M${x} 79v${-h}`).join('')} stroke="#1eb41e" strokeWidth="2.5" />
              </PlotSvg>
              <Legend>Size</Legend>
            </SizePlot>
            <TradeAxis>
              {trades.map((t, i) => <TradeTick key={t}>{i === 0 && <TradeZero>0</TradeZero>}{t}</TradeTick>)}
            </TradeAxis>
          </TesterPlots>
          <TesterTabs>
            <TesterTab>Settings</TesterTab>
            <TesterTab $bare>Results</TesterTab>
            <TesterTab $active>Graph</TesterTab>
            <TesterTab>Report</TesterTab>
            <TesterTab>Journal</TesterTab>
          </TesterTabs>
        </TesterBody>
      </Tester>

      <StatusBar>
        <StatusCell>For Help, press F1</StatusCell>
        {status.map(([text, w]) => <StatusCell key={text} $w={w}>{text}</StatusCell>)}
        <StatusCell $w={90}><ConnectionIcon />No connection</StatusCell>
      </StatusBar>
    </Window>
  );
}
